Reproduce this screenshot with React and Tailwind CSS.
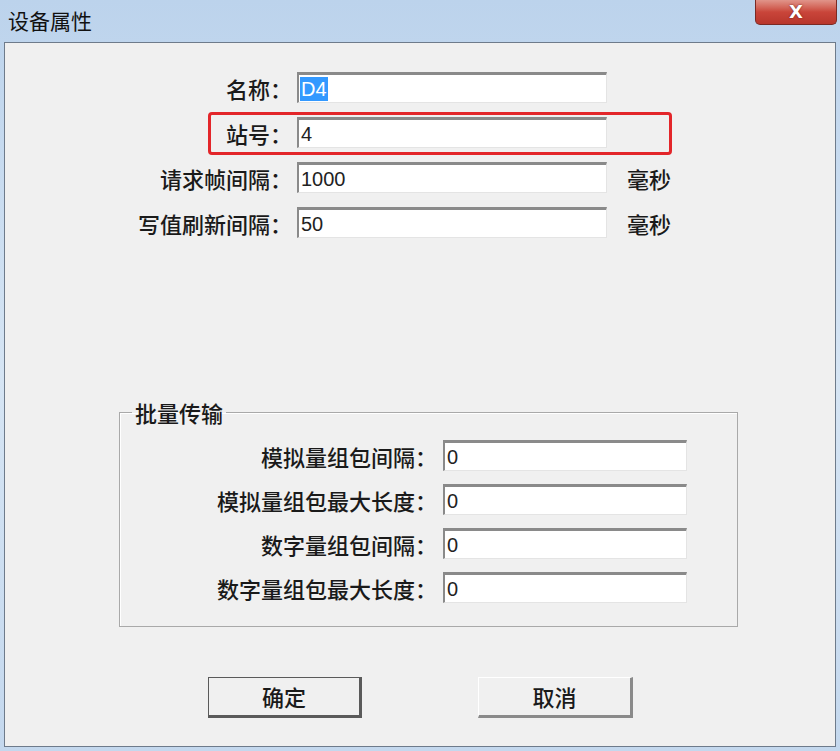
const cjk = "font-['Noto_Sans_CJK_SC','Noto_Sans',sans-serif]";
const val = "font-['Liberation_Sans','Noto_Sans_CJK_SC',sans-serif]";

function Field({ value, selected, className = '' }) {
  return (
    <div
      className={`h-[31px] flex items-center bg-white border-t-[3px] border-l-2 border-t-[#8a8a8a] border-l-[#8a8a8a] border-r border-b border-r-[#e4e4e4] border-b-[#e4e4e4] pl-[1px] ${className}`}
    >
      <span
        className={`${val} text-[20px] leading-[24px] px-[1px] ${
          selected ? 'bg-[#3399ff] text-white' : 'text-[#222]'
        }`}
      >
        {value}
      </span>
    </div>
  );
}

function Row({ label, value, unit, selected, highlight }) {
  return (
    <div className="relative flex items-center">
      <div className={`${cjk} w-[287px] text-right text-[22px] font-medium text-[#1a1a1a] leading-none`}>{label}</div>
      <Field value={value} selected={selected} className="ml-[5px] w-[310px]" />
      {unit && <div className={`${cjk} ml-[20px] text-[22px] font-medium text-[#1a1a1a] leading-none`}>{unit}</div>}
      {highlight && (
        <div className="absolute left-[203px] top-[-5px] w-[464px] h-[43px] border-[3px] border-[#e3262a] rounded-[4px]" />
      )}
    </div>
  );
}

function GroupRow({ label, value }) {
  return (
    <div className="flex items-center">
      <div className={`${cjk} w-[317px] text-right text-[22px] font-medium text-[#1a1a1a] leading-none`}>{label}</div>
      <Field value={value} className="ml-[6px] w-[244px]" />
    </div>
  );
}

export default function App() {
  return (
    <div className="w-[840px] h-[751px] flex flex-col overflow-hidden bg-gradient-to-b from-[#bcd3ec] via-[#d6e5f4] to-[#c4d8ee]">
      <div className="h-[42px] flex items-start justify-between">
        <span className={`${cjk} ml-[8px] mt-[5px] text-[21px] text-[#111]`}>设备属性</span>
        <div className="mr-[3px] w-[82px] h-[25px] rounded-b-[5px] border border-t-0 border-[#7a2a24] bg-gradient-to-b from-[#e0948a] via-[#c9453a] to-[#b8362c] flex items-center justify-center">
          <span className="font-['DejaVu_Sans',sans-serif] font-bold text-[18px] leading-none text-white [text-shadow:0_0_2px_#6a1a14]">X</span>
        </div>
      </div>

      <div className="flex-1 mx-[4px] mb-[4px] border border-[#6e7b8b] bg-[#f0f0f0] flex flex-col">
        <div className="pt-[29px] flex flex-col gap-[14px]">
          <Row label="名称：" value="D4" selected />
          <Row label="站号：" value="4" highlight />
          <Row label="请求帧间隔：" value="1000" unit="毫秒" />
          <Row label="写值刷新间隔：" value="50" unit="毫秒" />
        </div>

        <fieldset className="mt-[162px] ml-[114px] w-[619px] border border-[#a9a9a9] shadow-[inset_1px_1px_0_#ffffff] pt-[16px] pb-[23px] flex flex-col gap-[13px]">
          <legend className={`${cjk} ml-[12px] px-[3px] text-[22px] font-medium leading-[24px] text-[#1a1a1a]`}>批量传输</legend>
          <GroupRow label="模拟量组包间隔：" value="0" />
          <GroupRow label="模拟量组包最大长度：" value="0" />
          <GroupRow label="数字量组包间隔：" value="0" />
          <GroupRow label="数字量组包最大长度：" value="0" />
        </fieldset>

        <div className="mt-[50px] ml-[203px] flex gap-[116px]">
          <button
            type="button"
            className={`${cjk} w-[154px] h-[41px] bg-[#f0f0f0] border border-[#5a5a5a] border-r-[3px] border-b-[3px] text-[22px] font-medium text-[#1a1a1a]`}
          >
            确定
          </button>
          <button
            type="button"
            className={`${cjk} w-[155px] h-[41px] bg-[#f0f0f0] border-t border-l border-t-white border-l-white border-r-[3px] border-b-[3px] border-r-[#8a8a8a] border-b-[#8a8a8a] text-[22px] font-medium text-[#1a1a1a]`}
          >
            取消
          </button>
        </div>
      </div>
    </div>
  );
}
